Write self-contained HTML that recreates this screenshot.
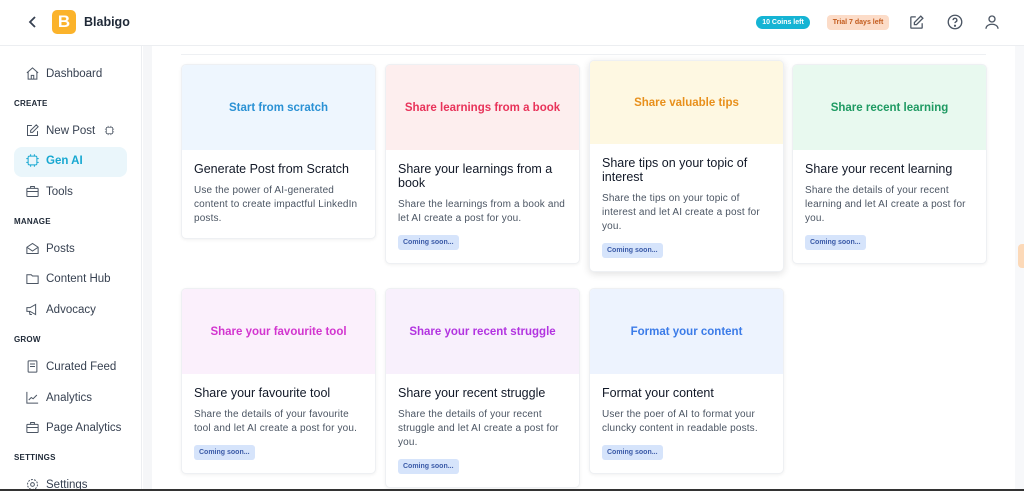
<!DOCTYPE html>
<html><head><meta charset="utf-8"><style>
*{box-sizing:border-box;margin:0;padding:0}
body{width:1024px;height:491px;overflow:hidden;background:#fff;font-family:"Liberation Sans",sans-serif;position:relative;color:#1f2937}
.hdr{position:absolute;left:0;top:0;width:1024px;height:46px;border-bottom:1px solid #eceef1;background:#fff}
.side{position:absolute;left:0;top:46px;width:142px;height:445px;background:#fff;border-right:1px solid #eceef1}
.strip{position:absolute;left:143px;top:46px;width:9px;height:445px;background:#f5f6f8}
.rstrip{position:absolute;left:1015px;top:46px;width:9px;height:445px;background:#f7f8fa}
.ni{position:absolute;left:25px;font-size:11.5px;color:#374151;display:flex;align-items:center;gap:6px}
.ni svg{width:15px;height:15px;stroke:#4b5563;fill:none;stroke-width:1.6}
.sec{position:absolute;left:14px;font-size:8px;font-weight:bold;color:#1f2937;letter-spacing:.2px}
.card{position:absolute;width:195px;background:#fff;border:1px solid #eef0f3;border-radius:5px;box-shadow:0 1px 3px rgba(0,0,0,.06);overflow:hidden}
.ch{height:85px;display:flex;align-items:center;justify-content:center;font-size:11.5px;font-weight:bold}
.cb{padding:12px 11px 0 12px}
.ct{font-size:12.5px;color:#111827;line-height:14px}
.cd{font-size:10px;letter-spacing:.15px;color:#4b5563;line-height:14px;margin-top:8px}
.cs{display:inline-block;margin-top:9px;background:#d6e4fb;color:#3b5ba8;font-size:7px;font-weight:bold;padding:4px 5px;border-radius:3px}
</style></head><body>
<div class="hdr">
<svg style="position:absolute;left:28px;top:15px" width="10" height="14" viewBox="0 0 10 14"><path d="M7 2L2 7l5 5" stroke="#374151" stroke-width="1.8" fill="none"/></svg>
<div style="position:absolute;left:52px;top:10px;width:24px;height:24px;border-radius:5px;background:#fbb32b;color:#fff;font-weight:bold;font-size:17px;text-align:center;line-height:24px">B</div>
<div style="position:absolute;left:84px;top:15px;font-size:12.5px;font-weight:bold;color:#1f2937">Blabigo</div>
<div style="position:absolute;left:756px;top:16px;width:54px;height:13px;border-radius:7px;background:#15b4d4;color:#fff;font-size:7px;font-weight:bold;text-align:center;line-height:13px">10 Coins left</div>
<div style="position:absolute;left:827px;top:15px;width:62px;height:15px;border-radius:4px;background:#fcdcc8;color:#c25a1c;font-size:7px;font-weight:bold;text-align:center;line-height:15px">Trial 7 days left</div>
<svg style="position:absolute;left:908px;top:14px" width="17" height="17" viewBox="0 0 24 24" fill="none" stroke="#4b5563" stroke-width="1.8"><path d="M11 4H5a1 1 0 0 0-1 1v14a1 1 0 0 0 1 1h14a1 1 0 0 0 1-1v-6"/><path d="M18 3l3 3-9 9H9v-3z"/></svg>
<svg style="position:absolute;left:946px;top:13px" width="18" height="18" viewBox="0 0 24 24" fill="none" stroke="#4b5563" stroke-width="1.8"><circle cx="12" cy="12" r="9"/><path d="M9.5 9.5a2.5 2.5 0 1 1 3.5 2.3c-.7.3-1 .9-1 1.7"/><circle cx="12" cy="17" r=".6" fill="#4b5563"/></svg>
<svg style="position:absolute;left:983px;top:13px" width="18" height="18" viewBox="0 0 24 24" fill="none" stroke="#4b5563" stroke-width="1.8"><circle cx="12" cy="8" r="4"/><path d="M4 21c0-4 4-6 8-6s8 2 8 6"/></svg>
</div>
<div class="side">
<div class="ni" style="top:20px"><svg viewBox="0 0 24 24"><path d="M3 11l9-8 9 8M5 9v12h14V9M10 21v-6h4v6"/></svg>Dashboard</div>
<div class="sec" style="top:53px">CREATE</div>
<div class="ni" style="top:77px"><svg viewBox="0 0 24 24"><path d="M11 4H4v16h16v-7"/><path d="M18 3l3 3-9 9H9v-3z"/></svg>New Post <svg viewBox="0 0 24 24" style="width:11px;height:11px;margin-left:3px"><rect x="5" y="5" width="14" height="14" rx="2"/><path d="M9 2v3M15 2v3M9 19v3M15 19v3M2 9h3M2 15h3M19 9h3M19 15h3"/></svg></div>
<div style="position:absolute;left:14px;top:101px;width:113px;height:30px;border-radius:8px;background:#eaf6fb"></div>
<div class="ni" style="top:107px;color:#17a8d1;font-weight:bold"><svg viewBox="0 0 24 24" style="stroke:#17a8d1"><rect x="5" y="5" width="14" height="14" rx="2"/><path d="M9 2v3M15 2v3M9 19v3M15 19v3M2 9h3M2 15h3M19 9h3M19 15h3"/></svg>Gen AI</div>
<div class="ni" style="top:138px"><svg viewBox="0 0 24 24"><rect x="3" y="7" width="18" height="13" rx="1"/><path d="M9 7V4h6v3M3 12h18"/></svg>Tools</div>
<div class="sec" style="top:171px">MANAGE</div>
<div class="ni" style="top:195px"><svg viewBox="0 0 24 24"><path d="M3 10l9-6 9 6v10H3z"/><path d="M3 10l9 6 9-6"/></svg>Posts</div>
<div class="ni" style="top:225px"><svg viewBox="0 0 24 24"><path d="M3 6h7l2 2h9v12H3z"/></svg>Content Hub</div>
<div class="ni" style="top:256px"><svg viewBox="0 0 24 24"><path d="M3 9h5l9-5v16l-9-5H3zM7 15l1 5h3"/></svg>Advocacy</div>
<div class="sec" style="top:289px">GROW</div>
<div class="ni" style="top:313px"><svg viewBox="0 0 24 24"><rect x="5" y="3" width="14" height="18" rx="1"/><path d="M8 8h8M8 12h8"/></svg>Curated Feed</div>
<div class="ni" style="top:344px"><svg viewBox="0 0 24 24"><path d="M3 3v18h18M6 16l4-4 3 2 6-6"/></svg>Analytics</div>
<div class="ni" style="top:374px"><svg viewBox="0 0 24 24"><rect x="3" y="7" width="18" height="13" rx="1"/><path d="M9 7V4h6v3M3 12h18"/></svg>Page Analytics</div>
<div class="sec" style="top:407px">SETTINGS</div>
<div class="ni" style="top:431px"><svg viewBox="0 0 24 24"><circle cx="12" cy="12" r="3"/><circle cx="12" cy="12" r="8" stroke-dasharray="3 2"/></svg>Settings</div>
</div>
<div class="strip"></div>
<div class="rstrip"></div>
<div style="position:absolute;left:1018px;top:244px;width:6px;height:24px;border-radius:4px 0 0 4px;background:#fcd9b8"></div>
<div style="position:absolute;left:181px;top:54px;width:805px;height:1px;background:#eef0f3"></div>

<div class="card" style="left:181px;top:64px;height:175px"><div class="ch" style="background:#eef6fe;color:#2a91d4">Start from scratch</div><div class="cb"><div class="ct">Generate Post from Scratch</div><div class="cd">Use the power of AI-generated content to create impactful LinkedIn posts.</div></div></div>
<div class="card" style="left:385px;top:64px;height:200px"><div class="ch" style="background:#fdeeee;color:#e8335a">Share learnings from a book</div><div class="cb"><div class="ct">Share your learnings from a book</div><div class="cd">Share the learnings from a book and let AI create a post for you.</div><span class="cs">Coming soon...</span></div></div>
<div class="card" style="left:589px;top:60px;height:212px;box-shadow:0 2px 8px rgba(0,0,0,.12)"><div class="ch" style="background:#fef8e2;color:#e8901c;height:83px">Share valuable tips</div><div class="cb"><div class="ct">Share tips on your topic of interest</div><div class="cd">Share the tips on your topic of interest and let AI create a post for you.</div><span class="cs">Coming soon...</span></div></div>
<div class="card" style="left:792px;top:64px;height:200px"><div class="ch" style="background:#e8f9ef;color:#1e9a62">Share recent learning</div><div class="cb"><div class="ct">Share your recent learning</div><div class="cd">Share the details of your recent learning and let AI create a post for you.</div><span class="cs">Coming soon...</span></div></div>

<div class="card" style="left:181px;top:288px;height:186px"><div class="ch" style="background:#fbf0fc;color:#d235cf">Share your favourite tool</div><div class="cb"><div class="ct">Share your favourite tool</div><div class="cd">Share the details of your favourite tool and let AI create a post for you.</div><span class="cs">Coming soon...</span></div></div>
<div class="card" style="left:385px;top:288px;height:200px"><div class="ch" style="background:#f8f0fc;color:#b234e0">Share your recent struggle</div><div class="cb"><div class="ct">Share your recent struggle</div><div class="cd">Share the details of your recent struggle and let AI create a post for you.</div><span class="cs">Coming soon...</span></div></div>
<div class="card" style="left:589px;top:288px;height:186px"><div class="ch" style="background:#edf3fe;color:#3b7be8">Format your content</div><div class="cb"><div class="ct">Format your content</div><div class="cd">User the poer of AI to format your cluncky content in readable posts.</div><span class="cs">Coming soon...</span></div></div>
<div style="position:absolute;left:0;top:489px;width:1024px;height:2px;background:#333"></div>
</body></html>
